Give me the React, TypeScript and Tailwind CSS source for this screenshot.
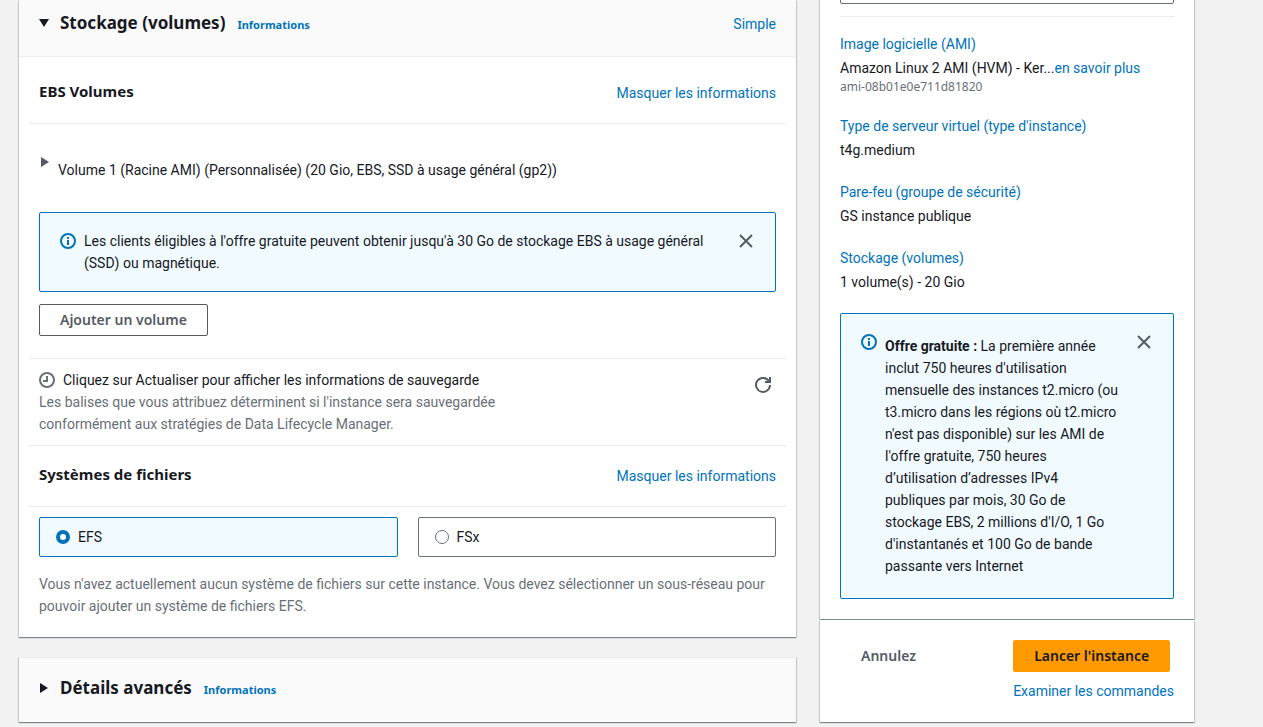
import { useState } from "react";
import type { ReactNode } from "react";

const PANEL =
  "bg-white shadow-[0_1px_1px_0_rgba(0,28,36,0.3),1px_1px_1px_0_rgba(0,28,36,0.15),-1px_1px_1px_0_rgba(0,28,36,0.15)]";
const LINK = "text-[#0073bb] hover:underline";
const TITLE = "font-['Noto_Sans',sans-serif] text-[17px] leading-[22px] font-bold";
const INFO_LINK = `${LINK} ml-3 pt-[2px] font-['Noto_Sans',sans-serif] text-[11px] leading-[22px] font-bold`;
const BUTTON = "h-8 rounded-[2px] px-5 font-['Noto_Sans',sans-serif] font-semibold";

const SUMMARY = [
  { label: "Type de serveur virtuel (type d'instance)", value: "t4g.medium" },
  { label: "Pare-feu (groupe de sécurité)", value: "GS instance publique" },
  { label: "Stockage (volumes)", value: "1 volume(s) - 20 Gio" },
];

function Caret({ open = false }: { open?: boolean }) {
  return (
    <svg viewBox="0 0 10 10" className="size-[10px] shrink-0" fill="currentColor" aria-hidden="true">
      {open ? <path d="M0 1h10L5 9z" /> : <path d="M1 0v10l8-5z" />}
    </svg>
  );
}

function InfoIcon() {
  return (
    <svg viewBox="0 0 16 16" className="size-4 shrink-0 text-[#0073bb]" fill="none" stroke="currentColor" strokeWidth="2" aria-hidden="true">
      <circle cx="8" cy="8" r="7" />
      <path d="M8 7v5M8 4v2" />
    </svg>
  );
}

function ClockIcon() {
  return (
    <svg viewBox="0 0 16 16" className="size-4 shrink-0 text-[#687078]" fill="none" stroke="currentColor" strokeWidth="2" aria-hidden="true">
      <circle cx="8" cy="8" r="7" />
      <path d="M8 4v5H4" />
    </svg>
  );
}

function RefreshIcon() {
  return (
    <svg viewBox="0 0 16 16" className="size-4" fill="none" stroke="currentColor" strokeWidth="2" aria-hidden="true">
      <path d="M15 8a7 7 0 1 1-2-5l2 2" />
      <path d="M10 5h5V0" />
    </svg>
  );
}

function CloseButton() {
  return (
    <button type="button" aria-label="Fermer" className="mr-[1px] size-4 shrink-0 text-[#545b64]">
      <svg viewBox="0 0 16 16" className="size-4" fill="none" stroke="currentColor" strokeWidth="2" aria-hidden="true">
        <path d="M2 2l12 12M14 2L2 14" />
      </svg>
    </button>
  );
}

function SectionHeading({ children }: { children: ReactNode }) {
  return (
    <div className="mx-[10px] flex items-start justify-between border-b border-[#eaeded] px-[10px] pt-[17px] pb-[19px]">
      <h3 className="font-['Noto_Sans',sans-serif] text-[15px] leading-[22px] font-bold">{children}</h3>
      <a href="#" className={`${LINK} pt-[2px]`}>
        Masquer les informations
      </a>
    </div>
  );
}

export default function App() {
  const [fileSystem, setFileSystem] = useState("EFS");

  return (
    <div className="flex min-h-screen items-start gap-6 overflow-hidden bg-[#f2f2f2] pr-[69px] pl-[19px] font-[Roboto,sans-serif] text-sm leading-[22px] text-[#16191f]">
      <main className="flex min-w-0 flex-1 flex-col gap-5">
        <section className={PANEL}>
          <header className="flex h-[57px] items-start border-b border-[#eaeded] bg-[#fafafa] px-5 pt-3">
            <button type="button" className="flex items-center gap-[11px]" aria-expanded="true">
              <Caret open />
              <span className={TITLE}>Stockage (volumes)</span>
            </button>
            <a href="#" className={INFO_LINK}>
              Informations
            </a>
            <a href="#" className={`${LINK} ml-auto pt-[1px]`}>
              Simple
            </a>
          </header>

          <div className="pt-[6px]">
            <SectionHeading>EBS Volumes</SectionHeading>
          </div>

          <div className="px-5">
            <button type="button" className="flex h-[88px] items-start gap-2 pt-[33px] pl-[1px] text-left">
              <span className="text-[#545b64]">
                <Caret />
              </span>
              <span className="pt-[2px]">
                Volume 1 (Racine AMI) (Personnalisée) (20 Gio, EBS, SSD à usage général (gp2))
              </span>
            </button>

            <div className="flex items-start gap-2 rounded-[2px] border border-[#0073bb] bg-[#f1faff] px-5 py-[17px]">
              <div className="pt-[3px]">
                <InfoIcon />
              </div>
              <p className="min-w-0 flex-1">
                Les clients éligibles à l'offre gratuite peuvent obtenir jusqu'à 30 Go de stockage EBS à usage général
                (SSD) ou magnétique.
              </p>
              <div className="pt-[3px]">
                <CloseButton />
              </div>
            </div>

            <button type="button" className={`${BUTTON} mt-3 mb-[22px] border border-[#545b64] bg-white text-[#545b64]`}>
              Ajouter un volume
            </button>
          </div>

          <div className="mx-[10px] flex items-start justify-between border-y border-[#eaeded] px-[10px] py-[10px]">
            <div>
              <p className="flex items-center gap-2">
                <ClockIcon />
                Cliquez sur Actualiser pour afficher les informations de sauvegarde
              </p>
              <p className="max-w-[480px] text-[#687078]">
                Les balises que vous attribuez déterminent si l'instance sera sauvegardée conformément aux stratégies de
                Data Lifecycle Manager.
              </p>
            </div>
            <button type="button" aria-label="Actualiser" className="mt-2 mr-[5px] text-[#545b64]">
              <RefreshIcon />
            </button>
          </div>

          <SectionHeading>Systèmes de fichiers</SectionHeading>

          <div className="px-5 pt-[10px] pb-5">
            <fieldset className="grid grid-cols-2 gap-5">
              {["EFS", "FSx"].map((name) => (
                <label
                  key={name}
                  className={`flex h-10 items-center gap-2 rounded-[2px] border px-4 ${
                    fileSystem === name ? "border-[#0073bb] bg-[#f1faff]" : "border-[#687078]"
                  }`}
                >
                  <input
                    type="radio"
                    name="file-system"
                    value={name}
                    checked={fileSystem === name}
                    onChange={() => setFileSystem(name)}
                    className="size-[14px] appearance-none rounded-full border border-[#687078] bg-white checked:border-4 checked:border-[#0073bb]"
                  />
                  {name}
                </label>
              ))}
            </fieldset>
            <p className="mt-4 text-[#687078]">
              Vous n'avez actuellement aucun système de fichiers sur cette instance. Vous devez sélectionner un
              sous-réseau pour pouvoir ajouter un système de fichiers EFS.
            </p>
          </div>
        </section>

        <section className={PANEL}>
          <header className="flex h-[65px] items-start border-t border-[#eaeded] bg-[#fafafa] px-5 pt-[19px]">
            <button type="button" className="flex items-center gap-[11px]" aria-expanded="false">
              <Caret />
              <span className={TITLE}>Détails avancés</span>
            </button>
            <a href="#" className={INFO_LINK}>
              Informations
            </a>
          </header>
        </section>
      </main>

      <aside className="-mt-7 w-[374px] shrink-0">
        <section className={`${PANEL} px-5 pb-5`}>
          <input
            type="text"
            aria-label="Nombre d'instances"
            className="block h-8 w-full rounded-[2px] border border-[#687078] px-2"
          />
          <hr className="mt-3 border-[#eaeded]" />

          <div className="mt-4 flex flex-col gap-5">
            <div>
              <a href="#" className={LINK}>
                Image logicielle (AMI)
              </a>
              <p className="mt-[2px]">
                Amazon Linux 2 AMI (HVM) - Ker...
                <a href="#" className={LINK}>
                  en savoir plus
                </a>
              </p>
              <p className="font-['Noto_Sans',sans-serif] text-xs leading-4 text-[#687078]">ami-08b01e0e711d81820</p>
            </div>
            {SUMMARY.map(({ label, value }) => (
              <div key={label}>
                <a href="#" className={LINK}>
                  {label}
                </a>
                <p className="mt-[2px]">{value}</p>
              </div>
            ))}

            <div className="flex items-start gap-2 rounded-[2px] border border-[#0073bb] bg-[#f1faff] px-5 py-5">
              <InfoIcon />
              <p className="min-w-0 flex-1 py-[1px] pr-2">
                <b>Offre gratuite :</b> La première année inclut 750 heures d'utilisation mensuelle des instances
                t2.micro (ou t3.micro dans les régions où t2.micro n'est pas disponible) sur les AMI de l'offre
                gratuite, 750 heures d’utilisation d’adresses IPv4 publiques par mois, 30 Go de stockage EBS, 2 millions
                d'I/O, 1 Go d'instantanés et 100 Go de bande passante vers Internet
              </p>
              <CloseButton />
            </div>
          </div>
        </section>

        <footer className={`${PANEL} mt-[1px] flex items-start justify-between p-5`}>
          <button type="button" className={`${BUTTON} border border-transparent text-[#545b64]`}>
            Annulez
          </button>
          <div className="flex flex-col items-start gap-2">
            <button type="button" className={`${BUTTON} border border-[#ff9900] bg-[#ff9900]`}>
              Lancer l'instance
            </button>
            <a href="#" className={LINK}>
              Examiner les commandes
            </a>
          </div>
        </footer>
      </aside>
    </div>
  );
}
